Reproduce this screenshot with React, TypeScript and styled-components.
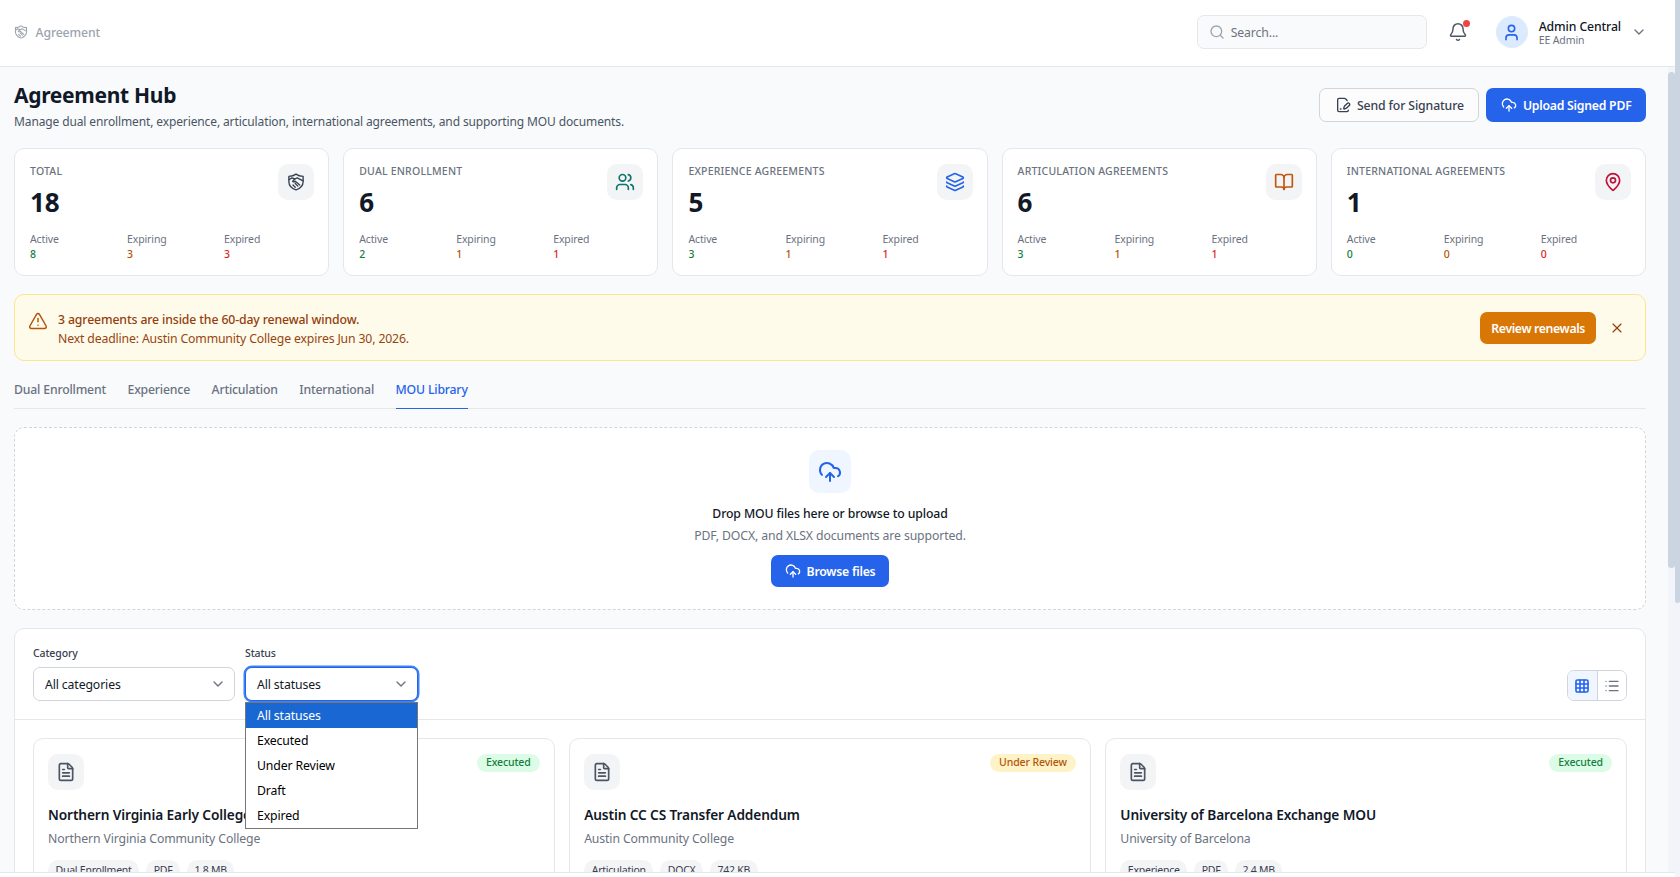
import React from 'react';
import styled, { createGlobalStyle } from 'styled-components';
import {
  Bell,
  BookOpen,
  ChevronDown,
  CloudUpload,
  FileSignature,
  FileText,
  Grid3x3,
  Layers,
  List,
  MapPin,
  Search,
  TriangleAlert,
  User,
  Users,
  X,
} from 'lucide-react';

const GlobalStyle = createGlobalStyle`
  html, body { margin: 0; padding: 0; height: 100%; overflow: hidden; }
  body {
    font-family: "Noto Sans", "Open Sans", Arial, sans-serif;
    letter-spacing: -0.12px;
    color: #111827;
    background: #fff;
  }
  * { box-sizing: border-box; }
`;

const Viewport = styled.div`
  height: 100vh;
  display: flex;
`;

const Column = styled.div`
  flex: 1;
  min-width: 0;
  display: flex;
  flex-direction: column;
`;

// The browser hides real scrollbars when photographed, so both bars are plain rails
const Rail = styled.div<{ $width: number }>`
  flex: 0 0 ${(p) => p.$width}px;
  background: #f1f5f9;
`;

const RailThumb = styled.div<{ $top: number; $height: number; $radius: string }>`
  margin-top: ${(p) => p.$top}px;
  height: ${(p) => p.$height}px;
  border-radius: ${(p) => p.$radius};
  background: #cbd5e1;
`;

const Topbar = styled.header`
  flex: 0 0 67px;
  display: flex;
  align-items: center;
  background: #fff;
  border-bottom: 1px solid #e5e7eb;
  padding: 0 28px 2px 14px;
`;

const Crumb = styled.div`
  display: flex;
  align-items: center;
  gap: 7.5px;
  font-size: 12.25px;
  font-weight: 500;
  color: #9ca3af;
  margin-right: auto;
`;

const SearchBox = styled.div`
  width: 230px;
  height: 34px;
  display: flex;
  align-items: center;
  gap: 6px;
  padding: 0 11px;
  background: #f9fafb;
  border: 1px solid #e5e7eb;
  border-radius: 7px;
  font-size: 12.25px;
  color: #6b7280;
  svg { color: #9ca3af; }
`;

const BellWrap = styled.div`
  position: relative;
  width: 20px;
  height: 20px;
  margin: 0 28px 0 21px;
  color: #4b5563;
`;

const BellDot = styled.span`
  position: absolute;
  top: -2px;
  right: -2px;
  width: 7px;
  height: 7px;
  border-radius: 50%;
  background: #ef4444;
`;

const Avatar = styled.div`
  width: 32px;
  height: 32px;
  border-radius: 50%;
  display: flex;
  align-items: center;
  justify-content: center;
  background: #dbeafe;
  color: #2563eb;
`;

const UserBlock = styled.div`
  display: flex;
  flex-direction: column;
  margin: 2px 10px 0 11px;
`;

const UserName = styled.span`
  font-size: 12.25px;
  font-weight: 500;
  line-height: 15px;
  color: #111827;
`;

const UserRole = styled.span`
  font-size: 10.5px;
  line-height: 13px;
  color: #6b7280;
`;

const Workspace = styled.div`
  flex: 1;
  min-height: 0;
  display: flex;
`;

const Main = styled.main`
  flex: 1;
  min-width: 0;
  overflow: hidden;
  background: #f8fafc;
  padding: 14px 22px 14px 14px;
`;

const BottomStrip = styled.div`
  flex: 0 0 5px;
  background: #fff;
  border-top: 1px solid #e5e7eb;
`;

const PageHead = styled.div`
  display: flex;
  justify-content: space-between;
  align-items: flex-start;
  margin-bottom: 17px;
`;

const PageTitle = styled.h1`
  margin: 0 0 4px;
  font-size: 21px;
  line-height: 28px;
  font-weight: 700;
  letter-spacing: -0.3px;
  color: #111827;
`;

const PageSub = styled.p`
  margin: 0;
  font-size: 12px;
  line-height: 18px;
  letter-spacing: -0.12px;
  color: #4b5563;
`;

const HeadActions = styled.div`
  display: flex;
  gap: 7px;
  margin-top: 7px;
`;

const Button = styled.button<{ $variant: 'outline' | 'primary' | 'amber' }>`
  height: 34px;
  display: inline-flex;
  align-items: center;
  justify-content: center;
  gap: 6px;
  padding: 0 ${(p) => (p.$variant === 'outline' ? '14.5px' : p.$variant === 'amber' ? '10px' : '13.5px')};
  border-radius: 7px;
  font-family: inherit;
  font-size: 12.25px;
  letter-spacing: ${(p) => (p.$variant === 'amber' ? '-0.36px' : p.$variant === 'primary' ? '-0.24px' : '-0.12px')};
  font-weight: ${(p) => (p.$variant === 'outline' ? 500 : 600)};
  border: 1px solid ${(p) => (p.$variant === 'outline' ? '#d1d5db' : 'transparent')};
  color: ${(p) => (p.$variant === 'outline' ? '#374151' : '#fff')};
  background: ${(p) =>
    p.$variant === 'outline' ? '#fcfcfd' : p.$variant === 'amber' ? '#d97706' : '#2563eb'};
`;

const RenewButton = styled(Button)`
  height: 32px;
  padding-top: 2px;
`;

const BrowseButton = styled(Button)`
  height: 32px;
  margin-top: 9px;
  padding: 0 13px;
`;

const StatGrid = styled.div`
  display: grid;
  grid-template-columns: repeat(5, minmax(0, 1fr));
  gap: 14px;
  margin-bottom: 18px;
`;

const StatCard = styled.section`
  position: relative;
  height: 128px;
  padding: 15px 14px 0 15px;
  background: #fff;
  border: 1px solid #e5e7eb;
  border-radius: 10px;
`;

const StatLabel = styled.div`
  font-size: 10.5px;
  line-height: 14px;
  font-weight: 500;
  letter-spacing: 0.2px;
  text-transform: uppercase;
  color: #6b7280;
`;

const StatValue = styled.div`
  font-size: 26px;
  line-height: 32px;
  font-weight: 700;
  margin-top: 8px;
  color: #111827;
`;

const IconTile = styled.div<{ $color: string }>`
  position: absolute;
  top: 15px;
  right: 14px;
  width: 36px;
  height: 36px;
  border-radius: 10px;
  display: flex;
  align-items: center;
  justify-content: center;
  background: #f3f4f6;
  color: ${(p) => p.$color};
`;

const StatSplit = styled.div`
  display: grid;
  grid-template-columns: 97px 97px auto;
  margin-top: 14px;
`;

const SplitLabel = styled.div`
  font-size: 10.5px;
  line-height: 15px;
  color: #6b7280;
`;

const SplitValue = styled.div<{ $color: string }>`
  font-size: 10.5px;
  line-height: 15px;
  font-weight: 500;
  color: ${(p) => p.$color};
`;

const Alert = styled.div`
  height: 67px;
  display: flex;
  align-items: center;
  padding: 0 20px 0 13px;
  margin-bottom: 17px;
  background: #fffbeb;
  border: 1px solid #fde68a;
  border-radius: 10px;
  color: #964510;
`;

const AlertIcon = styled.div`
  display: flex;
  color: #b45309;
  margin: -14px 10px 0 0;
`;

const AlertText = styled.div`
  flex: 1;
  padding-top: 2px;
  font-size: 12.25px;
  line-height: 19px;
  letter-spacing: -0.15px;
`;

const AlertLead = styled.div`
  font-weight: 500;
  letter-spacing: -0.12px;
  color: #92400e;
`;

const AlertClose = styled.div`
  display: flex;
  margin-left: 13px;
  color: #92400e;
`;

const Tabs = styled.nav`
  display: flex;
  gap: 21.5px;
  height: 31px;
  border-bottom: 1px solid #e5e7eb;
  margin-bottom: 18px;
`;

const Tab = styled.div<{ $active?: boolean }>`
  height: 31px;
  font-size: 12.25px;
  line-height: 23px;
  font-weight: 500;
  letter-spacing: -0.18px;
  color: ${(p) => (p.$active ? '#2563eb' : '#6b7280')};
  border-bottom: 1px solid ${(p) => (p.$active ? '#2563eb' : 'transparent')};
`;

const DropZone = styled.section`
  height: 183px;
  display: flex;
  flex-direction: column;
  align-items: center;
  padding-top: 22px;
  margin-bottom: 18px;
  background: #fff;
  border: 1px dashed #d1d5db;
  border-radius: 10px;
`;

const DropIcon = styled.div`
  width: 42px;
  height: 43px;
  border-radius: 10px;
  display: flex;
  align-items: center;
  justify-content: center;
  background: #eff6ff;
  color: #2563eb;
  margin-bottom: 11px;
`;

const DropTitle = styled.div`
  font-size: 12.25px;
  line-height: 20px;
  font-weight: 500;
  color: #111827;
`;

const DropSub = styled.div`
  font-size: 12.25px;
  line-height: 20px;
  margin-top: 2px;
  color: #6b7280;
`;

const Panel = styled.section`
  background: #fff;
  border: 1px solid #e5e7eb;
  border-radius: 10px;
`;

const FilterBar = styled.div`
  height: 91px;
  display: flex;
  align-items: flex-end;
  gap: 10px;
  padding: 0 18px 18px;
  border-bottom: 1px solid #e5e7eb;
`;

const Field = styled.div<{ $width: number }>`
  position: relative;
  width: ${(p) => p.$width}px;
`;

const FieldLabel = styled.div`
  font-size: 10.5px;
  line-height: 14px;
  font-weight: 500;
  color: #374151;
  margin-bottom: 7px;
`;

const Select = styled.div<{ $open?: boolean }>`
  height: 34px;
  display: flex;
  align-items: center;
  justify-content: space-between;
  padding: 0 8.5px 0 11px;
  border-radius: 7px;
  font-size: 12.25px;
  color: #111827;
  background: #fff;
  border: 1px solid ${(p) => (p.$open ? '#2563eb' : '#d1d5db')};
  box-shadow: ${(p) => (p.$open ? '0 0 0 1.5px #3b82f6' : 'none')};
  svg { color: #6b7280; }
`;

const OptionList = styled.div`
  position: absolute;
  top: 56px;
  left: 0;
  width: 173px;
  z-index: 5;
  background: #fff;
  border: 1px solid #767676;
`;

const Option = styled.div<{ $selected?: boolean }>`
  height: 25px;
  padding: 0 11px;
  display: flex;
  align-items: center;
  font-size: 12.25px;
  color: ${(p) => (p.$selected ? '#fff' : '#000')};
  background: ${(p) => (p.$selected ? '#1967d2' : '#fff')};
`;

const ViewToggle = styled.div`
  display: flex;
  margin-left: auto;
  width: 60px;
  height: 31px;
  border: 1px solid #d1d5db;
  border-radius: 7px;
  overflow: hidden;
`;

const ViewButton = styled.div<{ $active?: boolean }>`
  flex: 1;
  display: flex;
  align-items: center;
  justify-content: center;
  background: ${(p) => (p.$active ? '#eff6ff' : '#fff')};
  color: ${(p) => (p.$active ? '#2563eb' : '#6b7280')};
  & + & { border-left: 1px solid #d1d5db; }
`;

const DocGrid = styled.div`
  display: grid;
  grid-template-columns: repeat(3, minmax(0, 1fr));
  gap: 14.5px;
  padding: 18px;
`;

const DocCard = styled.article`
  position: relative;
  min-height: 260px;
  padding: 15px 14px;
  background: #fff;
  border: 1px solid #e5e7eb;
  border-radius: 10px;
`;

const DocIcon = styled.div`
  width: 36px;
  height: 36px;
  border-radius: 10px;
  display: flex;
  align-items: center;
  justify-content: center;
  background: #f3f4f6;
  color: #4b5563;
  margin-bottom: 15px;
`;

const StatusBadge = styled.span<{ $tone: 'green' | 'amber' }>`
  position: absolute;
  top: 15px;
  right: 14px;
  height: 18px;
  padding: 0 9px;
  border-radius: 9px;
  font-size: 10.5px;
  line-height: 16px;
  font-weight: 500;
  color: ${(p) => (p.$tone === 'green' ? '#15803d' : '#b45309')};
  background: ${(p) => (p.$tone === 'green' ? '#dcfce7' : '#fef3c7')};
`;

const DocTitle = styled.h3`
  margin: 0 0 5px;
  font-size: 13.7px;
  line-height: 20px;
  font-weight: 600;
  color: #111827;
`;

const DocOrg = styled.div`
  font-size: 12.25px;
  line-height: 18px;
  color: #6b7280;
  margin-bottom: 12px;
`;

const ChipRow = styled.div`
  display: flex;
  gap: 7px;
`;

const Chip = styled.span`
  height: 21px;
  padding: 0 7.5px;
  border-radius: 11px;
  font-size: 10.5px;
  line-height: 21px;
  letter-spacing: -0.24px;
  color: #374151;
  background: #f3f4f6;
`;

// no handshake-in-shield in lucide, so it is drawn here
const ShieldHandshake: React.FC<{ size: number }> = ({ size }) => (
  <svg
    width={size}
    height={size}
    viewBox="0 0 24 24"
    fill="none"
    stroke="currentColor"
    strokeWidth={1.8}
    strokeLinecap="round"
    strokeLinejoin="round"
  >
    <path d="M12 22.500C6.500 20.500 2.500 17 2.500 11.500V4.500C6 4.500 9.500 3.500 12 1.500c2.500 2 6 3 9.500 3v7c0 5.500-4 9-9.500 11z" />
    <path d="M2.500 9l4-2.500 4 1.500 3-1.500 8 4" />
    <path d="M10.500 8l-3 3c1 1.200 2.500 1.200 3.500 0l6 5" />
    <path d="M8 16l3 3M11 14l3.500 3.500" />
  </svg>
);

const stats = [
  { label: 'Total', total: 18, split: [8, 3, 3], color: '#374151', icon: <ShieldHandshake size={18} /> },
  { label: 'Dual Enrollment', total: 6, split: [2, 1, 1], color: '#0f766e', icon: <Users size={20} /> },
  { label: 'Experience Agreements', total: 5, split: [3, 1, 1], color: '#2563eb', icon: <Layers size={20} /> },
  { label: 'Articulation Agreements', total: 6, split: [3, 1, 1], color: '#c2560c', icon: <BookOpen size={20} /> },
  { label: 'International Agreements', total: 1, split: [0, 0, 0], color: '#be123c', icon: <MapPin size={20} /> },
];

const splitNames = ['Active', 'Expiring', 'Expired'];
const splitColors = ['#15803d', '#b45309', '#dc2626'];

const docs: { title: string; org: string; status: string; tone: 'green' | 'amber'; chips: string[] }[] = [
  {
    title: 'Northern Virginia Early College MOU',
    org: 'Northern Virginia Community College',
    status: 'Executed',
    tone: 'green',
    chips: ['Dual Enrollment', 'PDF', '1.8 MB'],
  },
  {
    title: 'Austin CC CS Transfer Addendum',
    org: 'Austin Community College',
    status: 'Under Review',
    tone: 'amber',
    chips: ['Articulation', 'DOCX', '742 KB'],
  },
  {
    title: 'University of Barcelona Exchange MOU',
    org: 'University of Barcelona',
    status: 'Executed',
    tone: 'green',
    chips: ['Experience', 'PDF', '2.4 MB'],
  },
];

const tabs = ['Dual Enrollment', 'Experience', 'Articulation', 'International', 'MOU Library'];
const statuses = ['All statuses', 'Executed', 'Under Review', 'Draft', 'Expired'];

const App: React.FC = () => {
  return (
    <Viewport>
      <GlobalStyle />
      <Column>
        <Topbar>
          <Crumb>
            <ShieldHandshake size={14} />
            Agreement
          </Crumb>
          <SearchBox>
            <Search size={16} />
            Search...
          </SearchBox>
          <BellWrap>
            <Bell size={20} strokeWidth={1.75} />
            <BellDot />
          </BellWrap>
          <Avatar>
            <User size={19} />
          </Avatar>
          <UserBlock>
            <UserName>Admin Central</UserName>
            <UserRole>EE Admin</UserRole>
          </UserBlock>
          <ChevronDown size={16} color="#6b7280" />
        </Topbar>

        <Workspace>
          <Main>
            <PageHead>
              <div>
                <PageTitle>Agreement Hub</PageTitle>
                <PageSub>
                  Manage dual enrollment, experience, articulation, international agreements, and supporting MOU documents.
                </PageSub>
              </div>
              <HeadActions>
                <Button $variant="outline">
                  <FileSignature size={16} />
                  Send for Signature
                </Button>
                <Button $variant="primary">
                  <CloudUpload size={16} />
                  Upload Signed PDF
                </Button>
              </HeadActions>
            </PageHead>

            <StatGrid>
              {stats.map((s) => (
                <StatCard key={s.label}>
                  <StatLabel>{s.label}</StatLabel>
                  <StatValue>{s.total}</StatValue>
                  <IconTile $color={s.color}>{s.icon}</IconTile>
                  <StatSplit>
                    {s.split.map((v, i) => (
                      <div key={splitNames[i]}>
                        <SplitLabel>{splitNames[i]}</SplitLabel>
                        <SplitValue $color={splitColors[i]}>{v}</SplitValue>
                      </div>
                    ))}
                  </StatSplit>
                </StatCard>
              ))}
            </StatGrid>

            <Alert>
              <AlertIcon>
                <TriangleAlert size={20} strokeWidth={1.75} />
              </AlertIcon>
              <AlertText>
                <AlertLead>3 agreements are inside the 60-day renewal window.</AlertLead>
                Next deadline: Austin Community College expires Jun 30, 2026.
              </AlertText>
              <RenewButton $variant="amber">Review renewals</RenewButton>
              <AlertClose>
                <X size={16} strokeWidth={1.75} />
              </AlertClose>
            </Alert>

            <Tabs>
              {tabs.map((t) => (
                <Tab key={t} $active={t === 'MOU Library'}>
                  {t}
                </Tab>
              ))}
            </Tabs>

            <DropZone>
              <DropIcon>
                <CloudUpload size={24} />
              </DropIcon>
              <DropTitle>Drop MOU files here or browse to upload</DropTitle>
              <DropSub>PDF, DOCX, and XLSX documents are supported.</DropSub>
              <BrowseButton $variant="primary">
                <CloudUpload size={16} />
                Browse files
              </BrowseButton>
            </DropZone>

            <Panel>
              <FilterBar>
                <Field $width={202}>
                  <FieldLabel>Category</FieldLabel>
                  <Select>
                    All categories
                    <ChevronDown size={16} />
                  </Select>
                </Field>
                <Field $width={173}>
                  <FieldLabel>Status</FieldLabel>
                  <Select $open>
                    All statuses
                    <ChevronDown size={16} />
                  </Select>
                  <OptionList>
                    {statuses.map((s, i) => (
                      <Option key={s} $selected={i === 0}>
                        {s}
                      </Option>
                    ))}
                  </OptionList>
                </Field>
                <ViewToggle>
                  <ViewButton $active>
                    <Grid3x3 size={16} strokeWidth={2.4} />
                  </ViewButton>
                  <ViewButton>
                    <List size={16} />
                  </ViewButton>
                </ViewToggle>
              </FilterBar>
              <DocGrid>
                {docs.map((d) => (
                  <DocCard key={d.title}>
                    <DocIcon>
                      <FileText size={20} />
                    </DocIcon>
                    <StatusBadge $tone={d.tone}>{d.status}</StatusBadge>
                    <DocTitle>{d.title}</DocTitle>
                    <DocOrg>{d.org}</DocOrg>
                    <ChipRow>
                      {d.chips.map((c) => (
                        <Chip key={c}>{c}</Chip>
                      ))}
                    </ChipRow>
                  </DocCard>
                ))}
              </DocGrid>
            </Panel>
          </Main>
          <Rail $width={7}>
            <RailThumb $top={5} $height={496} $radius="4px" />
          </Rail>
        </Workspace>
        <BottomStrip />
      </Column>
      <Rail $width={5}>
        <RailThumb $top={0} $height={603} $radius="0 0 3px 3px" />
      </Rail>
    </Viewport>
  );
};

export default App;
